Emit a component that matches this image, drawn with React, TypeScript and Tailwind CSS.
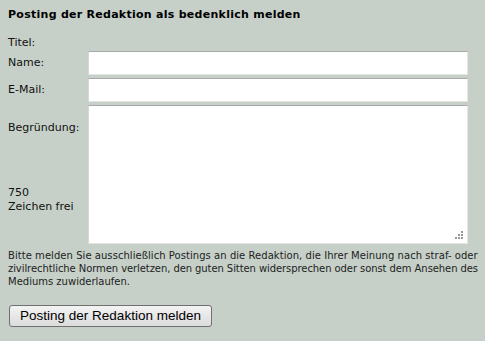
import React from "react";

export default function App() {
  const field =
    "w-[380px] bg-white border border-t-[#a9a9a9] border-l-[#d6d6d6] border-r-[#e4e4e4] border-b-[#e4e4e4] outline-none";
  return (
    <div className="w-[485px] h-[341px] bg-[#c6d0c8] px-2 pt-[8px] font-['DejaVu_Sans',Verdana,sans-serif] text-[11px] leading-[14px] text-[#111] overflow-hidden">
      <h3 className="font-bold text-[11px] leading-[14px] tracking-[0.27px] text-black">
        Posting der Redaktion als bedenklich melden
      </h3>
      <div className="mt-[14px] flex h-[15px]">
        <div className="w-[80px]">Titel:</div>
      </div>
      <div className="flex items-center h-[24px]">
        <div className="w-[80px]">Name:</div>
        <input className={field + " h-[24px]"} />
      </div>
      <div className="flex items-center h-[24px] mt-[3px]">
        <div className="w-[80px]">E-Mail:</div>
        <input className={field + " h-[24px]"} />
      </div>
      <div className="flex mt-[3px] h-[139px]">
        <div className="w-[80px] pt-[16px] flex flex-col">
          <div>Begründung:</div>
          <div className="mt-[51px]">750</div>
          <div>Zeichen frei</div>
        </div>
        <div className="relative">
          <textarea className={field + " h-[139px] resize-none block"} />
          <svg
            className="absolute right-[4px] bottom-[4px]"
            width="10"
            height="10"
            viewBox="0 0 10 10"
          >
            <g fill="#9a9a9a">
              <rect x="7" y="1" width="2" height="2" />
              <rect x="4" y="4" width="2" height="2" />
              <rect x="7" y="4" width="2" height="2" />
              <rect x="1" y="7" width="2" height="2" />
              <rect x="4" y="7" width="2" height="2" />
              <rect x="7" y="7" width="2" height="2" />
            </g>
          </svg>
        </div>
      </div>
      <p className="mt-[5px] text-[10px] leading-[13px] text-[#222] whitespace-nowrap">
        <span className="tracking-[0.05px]">
          Bitte melden Sie ausschließlich Postings an die Redaktion, die Ihrer Meinung nach straf- oder
        </span>
        <br />
        <span className="tracking-[-0.08px]">
          zivilrechtliche Normen verletzen, den guten Sitten widersprechen oder sonst dem Ansehen des
        </span>
        <br />
        Mediums zuwiderlaufen.
      </p>
      <button className="mt-[17px] ml-px w-[203px] h-[22px] rounded-[3px] border border-[#707070] bg-gradient-to-b from-[#f3f3f3] to-[#dcdcdc] font-['Liberation_Sans',Arial,sans-serif] text-[13.5px] leading-[20px] text-black">
        Posting der Redaktion melden
      </button>
    </div>
  );
}
